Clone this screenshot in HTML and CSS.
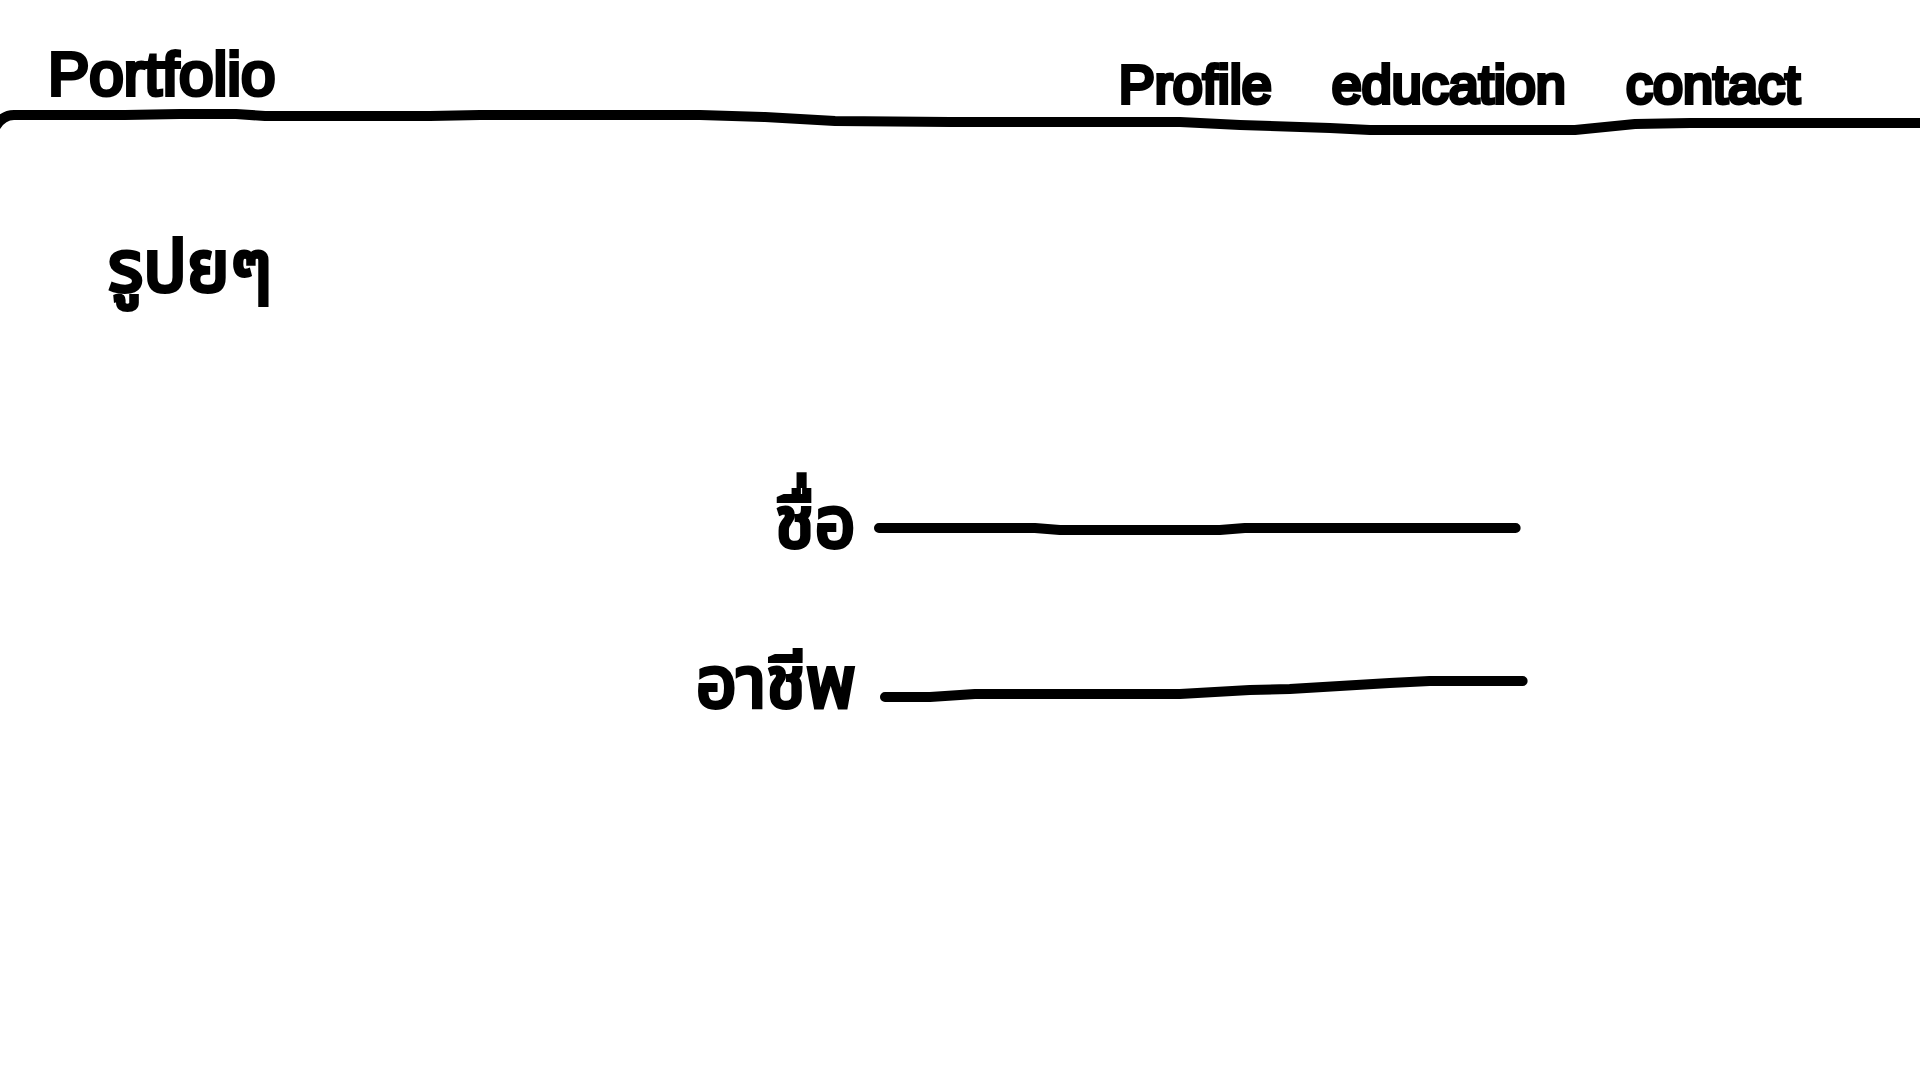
FILE: index.html
```html
<!DOCTYPE html>
<html lang="th">
<head>
<meta charset="utf-8">
<meta name="viewport" content="width=device-width, initial-scale=1">
<title>Portfolio</title>
<link rel="stylesheet" href="styles.css">
</head>
<body>
<header class="header">
  <div class="bar">
    <h1 class="brand">Portfolio</h1>
    <nav class="nav">
      <a href="#profile">Profile</a>
      <a href="#education">education</a>
      <a href="#contact">contact</a>
    </nav>
  </div>
  <svg class="divider" viewBox="0 0 1920 32" preserveAspectRatio="none" aria-hidden="true">
    <path d="M-4 20Q3 9 14 9L125 9L180 8L236 8L265 10L430 10L480 9L700 9L765 11L835 15L950 16L1180 16L1240 19L1330 22L1370 24L1575 24L1635 18L1690 17L1930 17"/>
  </svg>
</header>
<main class="main" id="profile">
  <h2 class="picture">รูปยๆ</h2>
  <form class="form">
    <div class="row">
      <label for="name">ชื่อ</label>
      <div class="field">
        <svg class="rule" viewBox="0 0 670 40" preserveAspectRatio="none" aria-hidden="true"><path d="M9 20H165L190 22H350L375 20H646"/></svg>
        <input id="name" type="text">
      </div>
    </div>
    <div class="row">
      <label for="job">อาชีพ</label>
      <div class="field">
        <svg class="rule" viewBox="0 0 670 40" preserveAspectRatio="none" aria-hidden="true"><path d="M15 29H60L105 26H310L380 22L420 21L520 15L560 13H653"/></svg>
        <input id="job" type="text">
      </div>
    </div>
  </form>
</main>
</body>
</html>
```
FILE: styles.css
```css
* { box-sizing: border-box; }
body {
  margin: 0;
  background: #fff;
  color: #000;
  font-family: "Liberation Sans", "Noto Sans Thai", sans-serif;
  -webkit-text-stroke: 4px #000;
}
.bar {
  display: flex;
  justify-content: space-between;
  align-items: flex-end;
  height: 106px;
  padding: 0 120px 0 48px;
}
.brand { margin: 0; font-size: 62px; font-weight: 400; line-height: 64px; }
.nav { display: flex; gap: 60px; }
.nav a { color: inherit; text-decoration: none; font-size: 54px; line-height: 44px; }
.divider { display: block; width: 100%; height: 32px; }
.divider path, .rule path {
  fill: none;
  stroke: #000;
  stroke-width: 10px;
  stroke-linecap: round;
  stroke-linejoin: round;
}
.main { padding: 56px 0 0 108px; }
.picture { margin: 0; font-size: 72px; font-weight: 400; line-height: 144px; }
.form {
  display: grid;
  gap: 16px;
  width: 47%;
  margin: 112px 0 0 32%;
}
.row { display: flex; gap: 14px; align-items: flex-end; }
.row label { width: 168px; text-align: right; font-size: 72px; line-height: 144px; }
.field { flex: 1; display: grid; padding-bottom: 46px; }
.rule, .field input { grid-area: 1 / 1; width: 100%; height: 40px; }
.field input { border: 0; padding: 0 16px; background: none; font: inherit; outline: none; }
```
